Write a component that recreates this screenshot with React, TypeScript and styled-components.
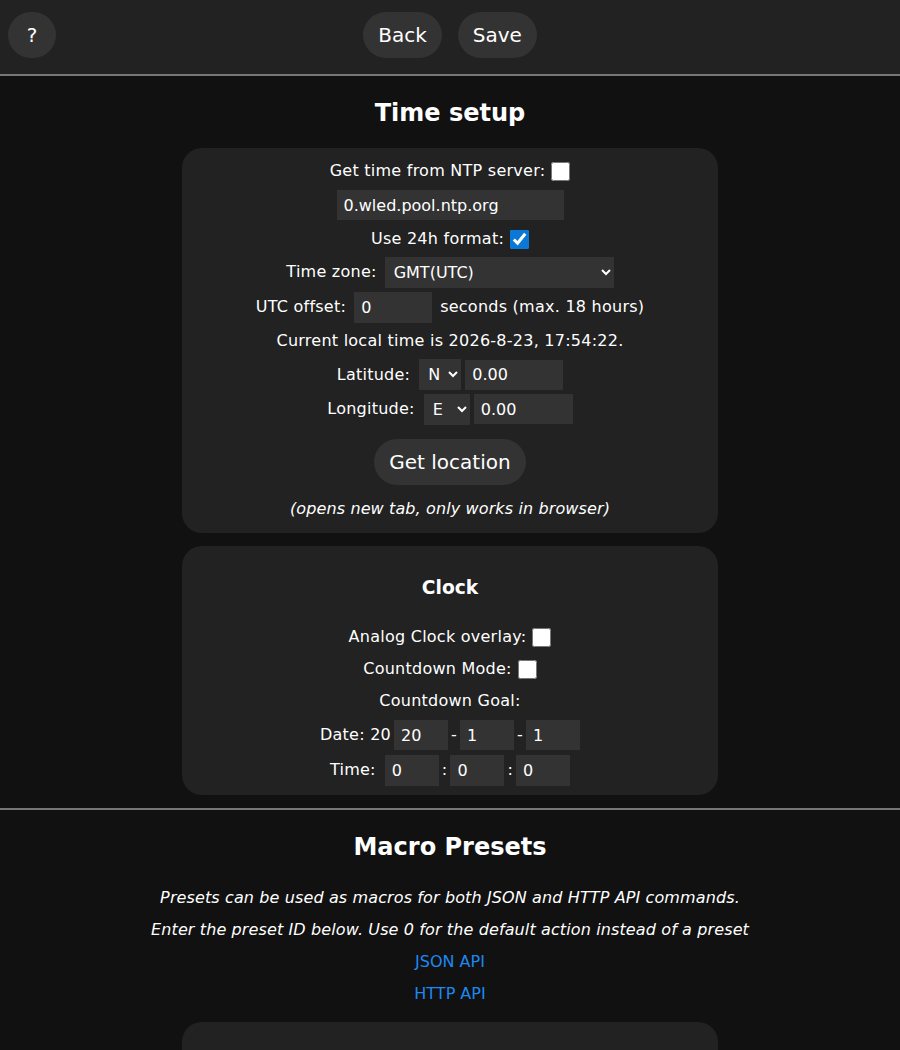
import React from 'react';
import styled, { createGlobalStyle } from 'styled-components';

const GlobalStyle = createGlobalStyle`
  html, body {
    margin: 0;
    padding: 0;
  }
  body {
    background: #111;
    color: #fff;
    font-family: "DejaVu Sans", Verdana, sans-serif;
    font-size: 16px;
    line-height: 32px;
    text-align: center;
  }
`;

const TopRow = styled.header`
  background: #222;
  padding: 12px 8px 8px;
  display: grid;
  grid-template-columns: 1fr auto 1fr;
  align-items: center;
  border-bottom: 8px solid #222;
`;

const HelpCell = styled.div`
  display: flex;
  justify-content: flex-start;
`;

const ButtonGroup = styled.div`
  display: flex;
  gap: 16px;
`;

const PillButton = styled.button<{ $w?: number }>`
  background: #333;
  color: #fff;
  font-family: "DejaVu Sans", Verdana, sans-serif;
  font-size: 20px;
  line-height: 24px;
  height: 46px;
  ${(p) => (p.$w ? `width: ${p.$w}px;` : '')}
  padding: 0 15px;
  border: 0;
  border-radius: 24px;
  cursor: pointer;
`;

const Rule = styled.hr`
  margin: 0;
  border: 0;
  height: 2px;
  background: #777;
`;

const Title = styled.h2`
  font-size: 24px;
  font-weight: bold;
  line-height: 32px;
  margin: 21px 0 19px;
`;

const SubTitle = styled.h3`
  font-size: 18.7px;
  font-weight: bold;
  line-height: 32px;
  margin: 19px 0 17px;
`;

const Section = styled.section`
  background: #222;
  width: 536px;
  box-sizing: border-box;
  margin: 0 auto 13px;
  padding: 7px 8px 8px;
  border-radius: 20px;
`;

const Row = styled.div<{ $h?: number; $gap?: number }>`
  display: flex;
  align-items: center;
  justify-content: center;
  height: ${(p) => p.$h ?? 32}px;
  gap: ${(p) => p.$gap ?? 8}px;
  white-space: nowrap;
  letter-spacing: 0.25px;
`;

const Check = styled.input.attrs({ type: 'checkbox' })`
  width: 19px;
  height: 19px;
  margin: 0 0 0 -2px;
  accent-color: #0a78d6;
`;

const Field = styled.input<{ $w: number; $tall?: boolean }>`
  width: ${(p) => p.$w}px;
  height: ${(p) => (p.$tall ? 31 : 30)}px;
  box-sizing: border-box;
  background: #333;
  color: #fff;
  border: 0;
  padding: 0 0 0 7px;
  margin: 0;
  font-family: "DejaVu Sans", Verdana, sans-serif;
  font-size: 16px;
  letter-spacing: 0;
  outline: none;
`;

const Picker = styled.select<{ $w: number }>`
  width: ${(p) => p.$w}px;
  height: 31px;
  box-sizing: border-box;
  background: #333;
  color: #fff;
  border: 0;
  padding: 0 0 0 5px;
  margin: 0;
  font-family: "DejaVu Sans", Verdana, sans-serif;
  font-size: 16px;
  letter-spacing: 0;
  outline: none;
`;

const Label = styled.span<{ $space?: number }>`
  margin-right: ${(p) => p.$space ?? 0}px;
`;

const Note = styled.div`
  font-style: italic;
  letter-spacing: 0.12px;
  height: 32px;
`;

const LocateButton = styled(PillButton)`
  margin: 13px 0 8px;
`;

const ApiLink = styled.a`
  display: block;
  color: #1e88f0;
  text-decoration: none;
  height: 32px;
`;

const Macro = styled.div`
  margin-top: 12px;
`;

export default function App() {
  return (
    <>
      <GlobalStyle />
      <TopRow>
        <HelpCell>
          <PillButton $w={48} type="button">?</PillButton>
        </HelpCell>
        <ButtonGroup>
          <PillButton type="button">Back</PillButton>
          <PillButton type="submit">Save</PillButton>
        </ButtonGroup>
        <div />
      </TopRow>
      <Rule />

      <Title>Time setup</Title>
      <Section>
        <Row>
          Get time from NTP server:
          <Check />
        </Row>
        <Row $h={36}>
          <Field $w={227} type="text" defaultValue="0.wled.pool.ntp.org" />
        </Row>
        <Row>
          Use 24h format:
          <Check defaultChecked />
        </Row>
        <Row $h={34}>
          Time zone:
          <Picker $w={229} defaultValue="0">
            <option value="0">GMT(UTC)</option>
          </Picker>
        </Row>
        <Row $h={36}>
          UTC offset:
          <Field $w={78} $tall type="text" defaultValue="0" />
          seconds (max. 18 hours)
        </Row>
        <Row>Current local time is 2026-8-23, 17:54:22.</Row>
        <Row $h={35} $gap={4}>
          <Label $space={5}>Latitude:</Label>
          <Picker $w={42} defaultValue="N">
            <option value="N">N</option>
            <option value="S">S</option>
          </Picker>
          <Field $w={98} type="text" defaultValue="0.00" />
        </Row>
        <Row $h={34} $gap={4}>
          <Label $space={5}>Longitude:</Label>
          <Picker $w={46} defaultValue="E">
            <option value="E">E</option>
            <option value="W">W</option>
          </Picker>
          <Field $w={99} type="text" defaultValue="0.00" />
        </Row>
        <LocateButton type="button">Get location</LocateButton>
        <Note>(opens new tab, only works in browser)</Note>
      </Section>

      <Section>
        <SubTitle>Clock</SubTitle>
        <Row>
          Analog Clock overlay:
          <Check />
        </Row>
        <Row>
          Countdown Mode:
          <Check />
        </Row>
        <Row>Countdown Goal:</Row>
        <Row $h={36} $gap={3}>
          Date: 20
          <Field $w={54} type="text" defaultValue="20" />
          -
          <Field $w={54} type="text" defaultValue="1" />
          -
          <Field $w={54} type="text" defaultValue="1" />
        </Row>
        <Row $h={34} $gap={3}>
          <Label $space={6}>Time:</Label>
          <Field $w={54} $tall type="text" defaultValue="0" />
          :
          <Field $w={54} $tall type="text" defaultValue="0" />
          :
          <Field $w={54} $tall type="text" defaultValue="0" />
        </Row>
      </Section>

      <Rule />
      <Title>Macro Presets</Title>
      <Note>Presets can be used as macros for both JSON and HTTP API commands.</Note>
      <Note>Enter the preset ID below. Use 0 for the default action instead of a preset</Note>
      <ApiLink href="#json">JSON API</ApiLink>
      <ApiLink href="#http">HTTP API</ApiLink>
      <Macro>
        <Section style={{ height: 120 }} />
      </Macro>
    </>
  );
}
